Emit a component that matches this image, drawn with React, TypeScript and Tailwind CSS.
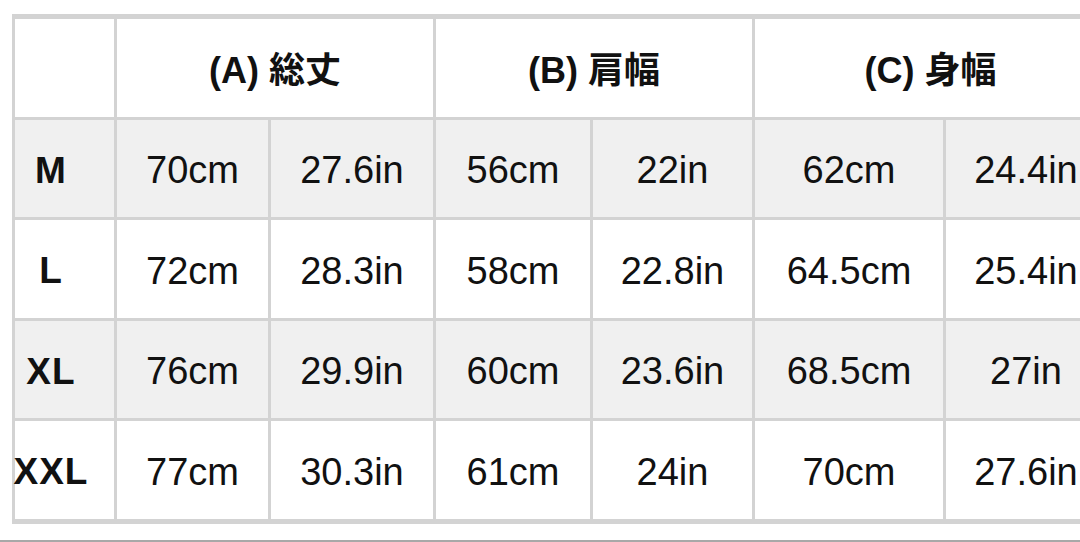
import React from "react";

const rows = [
  { size: "M", vals: ["70cm", "27.6in", "56cm", "22in", "62cm", "24.4in"], gray: true },
  { size: "L", vals: ["72cm", "28.3in", "58cm", "22.8in", "64.5cm", "25.4in"], gray: false },
  { size: "XL", vals: ["76cm", "29.9in", "60cm", "23.6in", "68.5cm", "27in"], gray: true },
  { size: "XXL", vals: ["77cm", "30.3in", "61cm", "24in", "70cm", "27.6in"], gray: false },
];

const font = { fontFamily: '"Liberation Sans", "Noto Sans CJK JP", Arial, sans-serif' };

export default function App() {
  return (
    <div className="w-[1080px] h-[542px] bg-white overflow-hidden text-[#111]" style={font}>
      <div className="h-[14px]" />
      <div className="w-[1080px] overflow-hidden">
        <div className="ml-[12px] w-[1100px] bg-[#d3d3d3] pt-[5px] pb-[5px] pl-[3px] pr-[3px]">
          <div className="grid grid-cols-[99px_151px_162px_154px_159px_188px_160px] grid-rows-[98px_97px_98px_97px_98px] gap-[3px]">
            <div className="bg-white" />
            <div className="col-span-2 bg-white flex items-center justify-center pt-[5px] text-[36px] font-bold">(A) 総丈</div>
            <div className="col-span-2 bg-white flex items-center justify-center pt-[5px] text-[36px] font-bold">(B) 肩幅</div>
            <div className="col-span-2 bg-white flex items-center justify-center pt-[5px] text-[36px] font-bold">(C) 身幅</div>
            {rows.map((r) => (
              <React.Fragment key={r.size}>
                <div className={`${r.gray ? "bg-[#f0f0f0]" : "bg-white"} flex items-center justify-center pr-[27px] pt-[4px] text-[37px] font-bold tracking-[1px] whitespace-nowrap`}>
                  {r.size}
                </div>
                {r.vals.map((v, i) => (
                  <div
                    key={i}
                    className={`${r.gray ? "bg-[#f0f0f0]" : "bg-white"} flex items-center justify-center pt-[4px] text-[38px] whitespace-nowrap`}
                  >
                    {v}
                  </div>
                ))}
              </React.Fragment>
            ))}
          </div>
        </div>
      </div>
      <div className="h-[16px]" />
      <div className="h-[2px] w-full bg-[#a8a8a8]" />
    </div>
  );
}
